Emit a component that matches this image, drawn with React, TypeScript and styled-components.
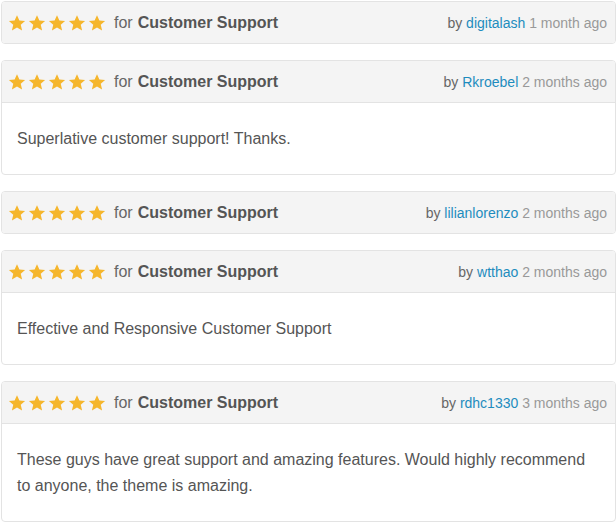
import React from 'react';
import styled, { createGlobalStyle } from 'styled-components';

const GlobalStyle = createGlobalStyle`
  body {
    margin: 0;
    background: #fff;
    font-family: "Liberation Sans", Arial, sans-serif;
  }
`;

const List = styled.div`
  width: 615px;
  padding: 1px 0 0 1px;
  display: flex;
  flex-direction: column;
  gap: 16px;
`;

const Card = styled.div`
  border: 1px solid #e3e3e3;
  border-radius: 4px;
  background: #fff;
  overflow: hidden;
`;

const Header = styled.div<{ $hasBody: boolean }>`
  height: 41px;
  display: flex;
  align-items: center;
  justify-content: space-between;
  padding: 0 8px 0 6px;
  background: #f4f4f4;
  border-bottom: ${p => (p.$hasBody ? '1px solid #e3e3e3' : 'none')};
`;

const Left = styled.div`
  display: flex;
  align-items: center;
  font-size: 16px;
  color: #666;
`;

const Stars = styled.div`
  display: flex;
  gap: 2px;
  margin-right: 8px;
`;

const Topic = styled.b`
  margin-left: 5px;
  color: #555;
`;

const Meta = styled.div`
  font-size: 14px;
  color: #666;
`;

const User = styled.a`
  color: #1e8cbe;
  text-decoration: none;
`;

const When = styled.span`
  color: #999;
`;

const Body = styled.div`
  padding: 23px 15px 22px;
  font-size: 16px;
  line-height: 26px;
  color: #555;
`;

const Star = () => (
  <svg width="18" height="18" viewBox="0 0 24 24">
    <path
      fill="#f5b62c"
      d="M12 1.5l3.2 7.1 7.6.7-5.8 5.1 1.8 7.6L12 18l-6.8 4 1.8-7.6L1.2 9.3l7.6-.7z"
    />
  </svg>
);

interface Review {
  user: string;
  when: string;
  text?: string;
}

const reviews: Review[] = [
  { user: 'digitalash', when: '1 month ago' },
  { user: 'Rkroebel', when: '2 months ago', text: 'Superlative customer support! Thanks.' },
  { user: 'lilianlorenzo', when: '2 months ago' },
  { user: 'wtthao', when: '2 months ago', text: 'Effective and Responsive Customer Support' },
  {
    user: 'rdhc1330',
    when: '3 months ago',
    text: 'These guys have great support and amazing features. Would highly recommend to anyone, the theme is amazing.',
  },
];

export default function App() {
  return (
    <>
      <GlobalStyle />
      <List>
        {reviews.map(r => (
          <Card key={r.user}>
            <Header $hasBody={!!r.text}>
              <Left>
                <Stars>
                  {[0, 1, 2, 3, 4].map(i => <Star key={i} />)}
                </Stars>
                for<Topic>Customer Support</Topic>
              </Left>
              <Meta>
                by <User href="#">{r.user}</User> <When>{r.when}</When>
              </Meta>
            </Header>
            {r.text && <Body>{r.text}</Body>}
          </Card>
        ))}
      </List>
    </>
  );
}
